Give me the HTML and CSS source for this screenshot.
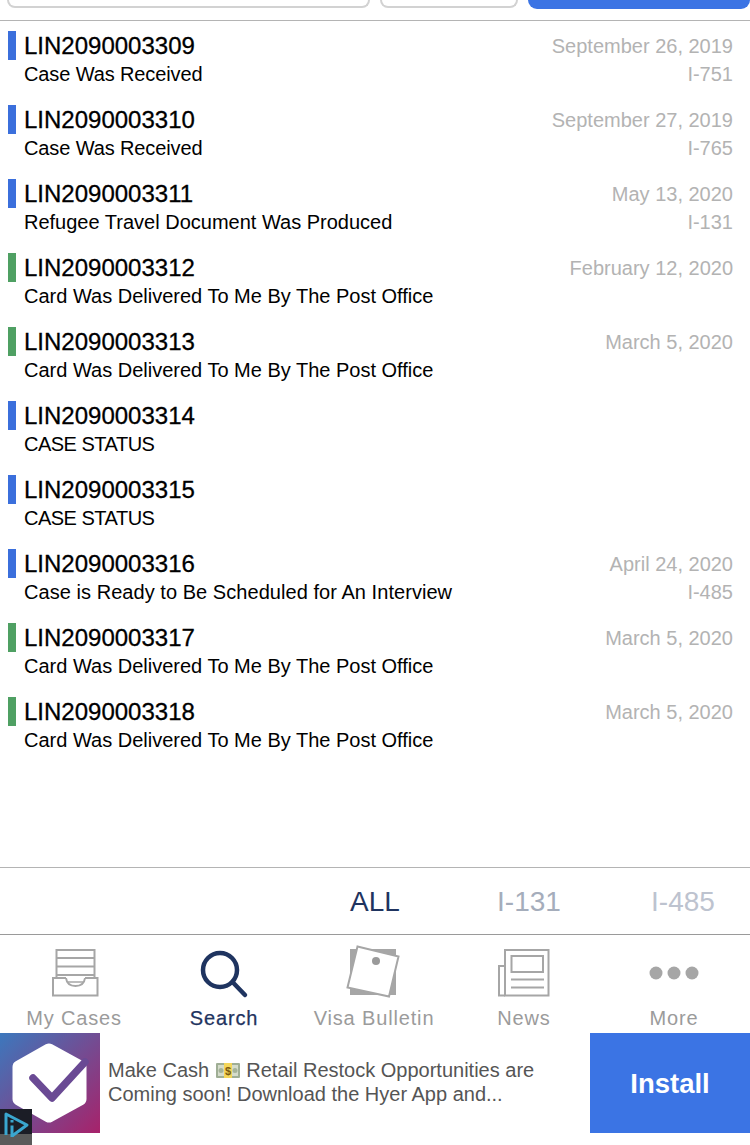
FILE: index.html
```html
<!DOCTYPE html>
<html lang="en">
<head>
<meta charset="utf-8">
<title>Cases</title>
<link rel="stylesheet" href="styles.css">
</head>
<body>
<div class="page">
  <header class="top">
    <div class="field field-main"></div>
    <div class="field field-small"></div>
    <div class="go"></div>
  </header>
  <main class="list">
    <div class="row"><span class="bar blue"></span><div class="main"><div class="num">LIN2090003309</div><div class="status tight">Case Was Received</div></div><div class="side"><div>September 26, 2019</div><div>I-751</div></div></div>
    <div class="row"><span class="bar blue"></span><div class="main"><div class="num">LIN2090003310</div><div class="status tight">Case Was Received</div></div><div class="side"><div>September 27, 2019</div><div>I-765</div></div></div>
    <div class="row"><span class="bar blue"></span><div class="main"><div class="num">LIN2090003311</div><div class="status">Refugee Travel Document Was Produced</div></div><div class="side"><div>May 13, 2020</div><div>I-131</div></div></div>
    <div class="row"><span class="bar green"></span><div class="main"><div class="num">LIN2090003312</div><div class="status">Card Was Delivered To Me By The Post Office</div></div><div class="side"><div>February 12, 2020</div></div></div>
    <div class="row"><span class="bar green"></span><div class="main"><div class="num">LIN2090003313</div><div class="status">Card Was Delivered To Me By The Post Office</div></div><div class="side"><div>March 5, 2020</div></div></div>
    <div class="row"><span class="bar blue"></span><div class="main"><div class="num">LIN2090003314</div><div class="status caps">CASE STATUS</div></div></div>
    <div class="row"><span class="bar blue"></span><div class="main"><div class="num">LIN2090003315</div><div class="status caps">CASE STATUS</div></div></div>
    <div class="row"><span class="bar blue"></span><div class="main"><div class="num">LIN2090003316</div><div class="status wide">Case is Ready to Be Scheduled for An Interview</div></div><div class="side"><div>April 24, 2020</div><div>I-485</div></div></div>
    <div class="row"><span class="bar green"></span><div class="main"><div class="num">LIN2090003317</div><div class="status">Card Was Delivered To Me By The Post Office</div></div><div class="side"><div>March 5, 2020</div></div></div>
    <div class="row"><span class="bar green"></span><div class="main"><div class="num">LIN2090003318</div><div class="status">Card Was Delivered To Me By The Post Office</div></div><div class="side"><div>March 5, 2020</div></div></div>
  </main>
  <div class="filter">
    <span class="f-item f-all">ALL</span>
    <span class="f-item f-131">I-131</span>
    <span class="f-item f-485">I-485</span>
  </div>
  <nav class="tabs">
    <div class="tab">
      <svg class="ico" viewBox="45 945 60 54"><g fill="none" stroke="#a6a6a6" stroke-width="2"><path d="M56.500 977V950H94.500V977"/><path d="M57 958H94M57 966.500H94M57 975H94"/><path d="M66 978H53V995.500H97.500V978H85"/><path d="M66 978Q67 986 75.500 986Q84 986 85 978" /><path d="M68 982H83" stroke-width="1.500"/></g></svg>
      <span class="t-label">My Cases</span>
    </div>
    <div class="tab t-on">
      <svg class="ico" viewBox="195 945 60 54"><g fill="none" stroke="#1f3460" stroke-width="4.500" stroke-linecap="round"><circle cx="220" cy="970" r="17"/><path d="M232.500 982L245 995"/></g></svg>
      <span class="t-label">Search</span>
    </div>
    <div class="tab">
      <svg class="ico" viewBox="345 945 60 54"><rect x="350" y="949" width="46" height="46" fill="#a6a6a6"/><path d="M357.500 946.500L398.500 956.500L389 996.500L347.500 987.500Z" fill="#fff" stroke="#a6a6a6" stroke-width="2"/><circle cx="376" cy="961" r="4" fill="#9a9a9a"/></svg>
      <span class="t-label">Visa Bulletin</span>
    </div>
    <div class="tab">
      <svg class="ico" viewBox="495 945 60 54"><g fill="none" stroke="#a6a6a6" stroke-width="2"><rect x="505" y="950" width="43.500" height="45.500"/><path d="M505 966H499V995.500H505"/><rect x="511.500" y="956" width="31.500" height="16"/><path d="M511 979.500H544M511 987.500H544"/></g></svg>
      <span class="t-label">News</span>
    </div>
    <div class="tab">
      <svg class="ico" viewBox="645 945 60 54"><g fill="#a6a6a6"><circle cx="656" cy="973" r="6.500"/><circle cx="674" cy="973" r="6.500"/><circle cx="692" cy="973" r="6.500"/></g></svg>
      <span class="t-label">More</span>
    </div>
  </nav>
  <aside class="ad">
    <svg class="ad-icon" viewBox="0 0 100 100">
      <defs><linearGradient id="adg" x1="0" y1="0" x2="1" y2="1"><stop offset="0" stop-color="#3c78bd"/><stop offset="1" stop-color="#a8226a"/></linearGradient></defs>
      <rect width="100" height="100" fill="url(#adg)"/>
      <path d="M49 17L80 34V66L49 83L19 66V34Z" fill="#fff" stroke="#fff" stroke-width="13" stroke-linejoin="round"/>
      <path d="M33 45L52 65L85 29" fill="none" stroke="#6a4a94" stroke-width="7.500" stroke-linecap="round" stroke-linejoin="round"/>
    </svg>
    <p class="ad-text">Make Cash <svg class="cash" viewBox="0 0 24 15"><rect width="24" height="15" rx="1" fill="#9fae95"/><rect x="2" y="2" width="20" height="11" fill="#d5dccb"/><circle cx="5" cy="7.500" r="2.500" fill="#a5b39a"/><circle cx="19" cy="7.500" r="2.500" fill="#a5b39a"/><rect x="8" y="0" width="8" height="15" fill="#f4d65a"/><text x="12" y="11.500" class="cash-s">$</text></svg> Retail Restock Opportunities are<br>Coming soon! Download the Hyer App and...</p>
    <div class="install">Install</div>
  </aside>
  <div class="badge">
    <svg class="badge-ico" viewBox="0 0 32 36"><path d="M6 26V5L27 16L12 27" fill="none" stroke="#3aa6cf" stroke-width="3" stroke-linejoin="round"/><path d="M12 16.500V28M12 11V13.500" fill="none" stroke="#3aa6cf" stroke-width="3"/></svg>
  </div>
</div>
</body>
</html>
```
FILE: styles.css
```css
* { box-sizing: border-box; }
html, body { margin: 0; padding: 0; background: #fff; }
body { font-family: "Liberation Sans", Arial, sans-serif; color: #000; }
.page { position: relative; width: 750px; height: 1145px; overflow: hidden; display: flex; flex-direction: column; }

.top { height: 21px; flex: none; display: flex; align-items: flex-start; gap: 10px; padding-left: 7px; border-bottom: 1px solid #b4b4b4; }
.field { height: 8px; border: 2px solid #d2d2d2; border-top: 0; border-radius: 0 0 10px 10px; }
.field-main { width: 363px; }
.field-small { width: 138px; }
.go { flex: 1; height: 9px; background: #3b74e4; border-radius: 0 0 10px 10px; }

.list { flex: 1; }
.row { height: 74px; display: flex; padding: 10px 17px 0 8px; }
.bar { width: 8px; height: 29px; flex: none; margin-right: 8px; }
.blue { background: #3b6fdc; }
.green { background: #4fa063; }
.main { flex: 1; }
.num { font-size: 24px; line-height: 29px; -webkit-text-stroke: 0.3px #000; }
.status { font-size: 20px; line-height: 29px; }
.tight { letter-spacing: -0.12px; }
.caps { letter-spacing: -0.5px; }
.wide { letter-spacing: 0.05px; }
.side { padding-top: 1px; text-align: right; font-size: 20px; line-height: 28px; color: #b3b3b3; }

.filter { height: 68px; flex: none; display: flex; align-items: center; padding: 2px 0 0 298px; border-top: 1px solid #b4b4b4; border-bottom: 1px solid #9a9a9a; font-size: 28px; }
.f-item { width: 154px; flex: none; text-align: center; }
.f-all { color: #1f3460; }
.f-131 { color: #a5adbb; }
.f-485 { color: #bdc3cf; }

.tabs { height: 98px; flex: none; display: flex; padding-top: 10px; }
.tab { width: 150px; flex: none; display: flex; flex-direction: column; align-items: center; }
.ico { width: 60px; height: 54px; display: block; }
.t-label { margin: 6px 2px 0 0; font-size: 20px; line-height: 26px; letter-spacing: 0.85px; color: #9b9b9b; }
.t-on .t-label { color: #1f3460; -webkit-text-stroke: 0.25px #1f3460; }

.ad { height: 100px; flex: none; display: flex; align-items: center; margin-bottom: 12px; }
.ad-icon { width: 100px; height: 100px; flex: none; display: block; }
.ad-text { flex: 1; margin: 0 0 3px 8px; font-size: 20px; line-height: 24px; color: #555; }
.cash { width: 24px; height: 15px; margin: 0 1px; vertical-align: -1px; }
.cash-s { font-size: 11px; font-weight: bold; text-anchor: middle; fill: #7a5a10; }
.install { width: 160px; height: 100px; flex: none; display: flex; align-items: center; justify-content: center; padding-top: 2px; background: #3b74e4; color: #fff; font-size: 27.500px; font-weight: bold; }

.badge { position: absolute; left: 0; bottom: 0; width: 32px; height: 36px; background: linear-gradient(#1b1d26 0 25px, #5a5a5a 25px); }
.badge-ico { width: 32px; height: 36px; display: block; }
```
